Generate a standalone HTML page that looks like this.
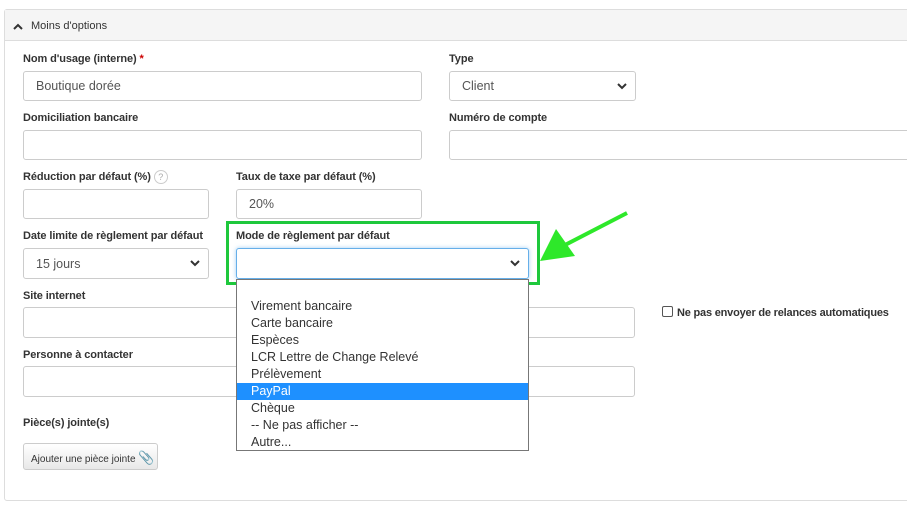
<!DOCTYPE html>
<html><head><meta charset="utf-8"><style>
*{box-sizing:border-box}
body{margin:0;width:907px;height:510px;background:#fff;font-family:"Liberation Sans",Arial,sans-serif;color:#333;position:relative;overflow:hidden}
.a{position:absolute}
.panel{left:4px;top:9px;width:920px;height:492px;border:1px solid #ddd;border-radius:3px}
.head{left:5px;top:10px;width:910px;height:31px;background:#f5f5f5;border-bottom:1px solid #ddd;font-size:11px}
.lbl{font-size:11px;font-weight:bold;color:#333;letter-spacing:-0.1px}
.in{border:1px solid #ccc;border-radius:3px;background:#fff;font-size:12.5px;padding-left:12px;display:flex;align-items:center;color:#555}
.chev{position:absolute;right:8px;top:10px}
.dd{left:236px;top:279px;width:293px;height:172px;border:1px solid #777;background:#fff;font-size:12.5px;color:#333}
.dd div{height:17px;line-height:17px;padding-left:14px}
</style></head><body>
<div class="a panel"></div>
<div class="a head"><svg class="a" style="left:8px;top:13px" width="10" height="7" viewBox="0 0 10 7"><path d="M1 6L5 2L9 6" stroke="#333" stroke-width="2" fill="none"/></svg><span class="a" style="left:26px;top:10px;color:#333">Moins d'options</span></div>

<div class="a lbl" style="left:23px;top:53px">Nom d'usage (interne) <span style="color:#c00">*</span></div>
<div class="a in" style="left:23px;top:71px;width:399px;height:30px">Boutique dorée</div>
<div class="a lbl" style="left:449px;top:53px">Type</div>
<div class="a in" style="left:449px;top:71px;width:187px;height:30px">Client<svg class="chev" width="10" height="8" viewBox="0 0 10 8"><path d="M1 2L5 6L9 2" stroke="#333" stroke-width="2" fill="none"/></svg></div>

<div class="a lbl" style="left:23px;top:112px">Domiciliation bancaire</div>
<div class="a in" style="left:23px;top:130px;width:399px;height:30px"></div>
<div class="a lbl" style="left:449px;top:112px">Numéro de compte</div>
<div class="a in" style="left:449px;top:130px;width:480px;height:30px"></div>

<div class="a lbl" style="left:23px;top:170px">Réduction par défaut (%) <span style="display:inline-block;width:14px;height:14px;border:1px solid #ccc;border-radius:50%;font-size:9px;color:#aaa;text-align:center;line-height:12px;font-weight:normal;vertical-align:middle">?</span></div>
<div class="a in" style="left:23px;top:189px;width:186px;height:30px"></div>
<div class="a lbl" style="left:236px;top:171px">Taux de taxe par défaut (%)</div>
<div class="a in" style="left:236px;top:189px;width:186px;height:30px">20%</div>

<div class="a lbl" style="left:23px;top:230px">Date limite de règlement par défaut</div>
<div class="a in" style="left:23px;top:248px;width:186px;height:31px">15 jours<svg class="chev" width="10" height="8" viewBox="0 0 10 8"><path d="M1 2L5 6L9 2" stroke="#333" stroke-width="2" fill="none"/></svg></div>
<div class="a lbl" style="left:236px;top:230px">Mode de règlement par défaut</div>
<div class="a in" style="left:236px;top:248px;width:293px;height:31px;border-color:#66afe9;box-shadow:0 0 4px rgba(102,175,233,.6)"><svg class="chev" width="10" height="8" viewBox="0 0 10 8"><path d="M1 2L5 6L9 2" stroke="#333" stroke-width="2" fill="none"/></svg></div>
<div class="a" style="left:226px;top:221px;width:314px;height:64px;border:3px solid #1ec83c"></div>

<svg class="a" style="left:535px;top:205px" width="100" height="65" viewBox="0 0 100 65"><path d="M92 8L30 40" stroke="#2ee82a" stroke-width="4"/><path d="M5 56L21 24L40 51Z" fill="#2ee82a"/></svg>

<div class="a lbl" style="left:23px;top:290px">Site internet</div>
<div class="a in" style="left:23px;top:307px;width:612px;height:31px"></div>
<div class="a lbl" style="left:23px;top:349px">Personne à contacter</div>
<div class="a in" style="left:23px;top:366px;width:612px;height:31px"></div>
<div class="a" style="left:662px;top:306px;width:11px;height:11px;border:1px solid #555;border-radius:2px"></div>
<div class="a lbl" style="left:677px;top:307px;letter-spacing:-0.2px">Ne pas envoyer de relances automatiques</div>

<div class="a lbl" style="left:23px;top:417px">Pièce(s) jointe(s)</div>
<div class="a" style="left:23px;top:443px;width:135px;height:27px;border:1px solid #ccc;border-radius:3px;background:linear-gradient(#fff,#e8e8e8);font-size:10px;padding:6px 0 0 7px">Ajouter une pièce jointe <span style="color:#777;font-size:13px">&#128206;</span></div>

<div class="a dd">
<div style="height:18px"></div>
<div>Virement bancaire</div><div>Carte bancaire</div><div>Espèces</div><div>LCR Lettre de Change Relevé</div><div>Prélèvement</div>
<div style="background:#1e90ff;color:#fff">PayPal</div><div>Chèque</div><div>-- Ne pas afficher --</div><div>Autre...</div>
</div>
</body></html>
